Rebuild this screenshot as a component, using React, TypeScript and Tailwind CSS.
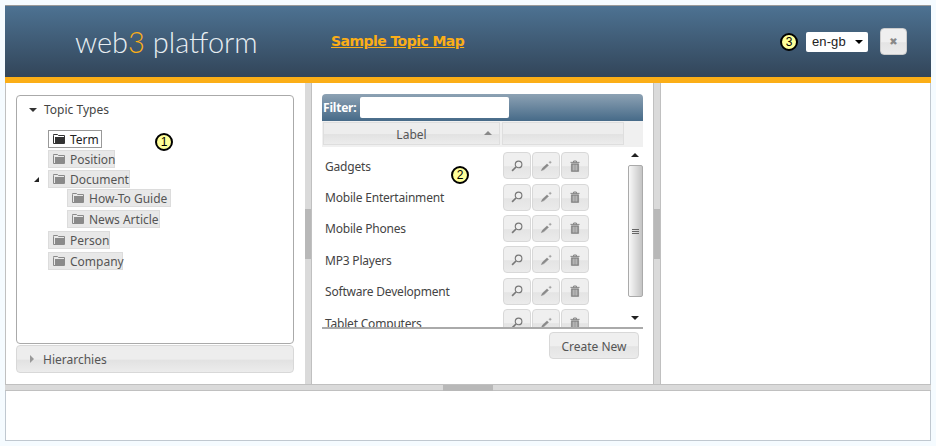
const ui = { fontFamily: '"Noto Sans", "DejaVu Sans", sans-serif' };

function Folder({ dark }: { dark?: boolean }) {
  const c = dark ? "#333" : "#8a8a8a";
  return (
    <svg width="12" height="10" viewBox="0 0 12 10" className="shrink-0">
      <path d="M0.5 1.5V0.5h4l1 1h6v8h-11z" fill="none" stroke={c} strokeWidth="1" />
      <rect x="2" y="3" width="10" height="6" fill={c} />
    </svg>
  );
}

function Badge({ n, className }: { n: number; className?: string }) {
  return (
    <div
      className={`flex h-[18px] w-[18px] items-center justify-center rounded-full border-2 border-black bg-[#ffff99] text-[12px] leading-none text-black ${className ?? ""}`}
      style={{ fontFamily: '"Liberation Sans", sans-serif' }}
    >
      {n}
    </div>
  );
}

function TreeItem({ label, active, width }: { label: string; active?: boolean; width: number }) {
  return (
    <div
      className={`flex h-[18px] items-center gap-[5px] border pl-[4px] text-[12px] ${
        active ? "border-[#999] bg-white text-[#222]" : "border-[#dcdcdc] bg-[#e8e8e8] text-[#555]"
      }`}
      style={{ width }}
    >
      <Folder dark={active} />
      <span className="pt-[2px] whitespace-nowrap">{label}</span>
    </div>
  );
}

function IconButton({ kind }: { kind: "search" | "edit" | "trash" }) {
  return (
    <div className="flex h-[27px] w-[28px] items-center justify-center rounded-[4px] border border-[#d8d8d8] bg-[linear-gradient(#efefef_0%,#efefef_50%,#e4e4e4_55%,#ebebeb_100%)]">
      {kind === "search" && (
        <svg width="12" height="12" viewBox="0 0 13 13" fill="none" stroke="#777">
          <circle cx="8.2" cy="4.8" r="3.6" strokeWidth="1.2" />
          <path d="M5.4 7.6L1.2 11.8" strokeWidth="1.8" />
        </svg>
      )}
      {kind === "edit" && (
        <svg width="12" height="12" viewBox="0 0 13 13" fill="none" stroke="#888">
          <path d="M1.5 11.5L2.8 8.8L7.6 4.2L9.2 5.8L4.2 10.4Z" fill="#888" strokeWidth="0.6" />
          <path d="M11 1v3M9.5 2.5h3" strokeWidth="0.7" />
        </svg>
      )}
      {kind === "trash" && (
        <svg width="10" height="12" viewBox="0 0 11 13" fill="none" stroke="#777">
          <path d="M0.5 2.5h10M4 2.5V1h3v1.5" strokeWidth="1" />
          <path d="M1.5 4h8v8.5h-8z" fill="#808080" strokeWidth="0.6" />
          <path d="M3.5 5v6.5M5.5 5v6.5M7.5 5v6.5" stroke="#ececec" strokeWidth="0.8" />
        </svg>
      )}
    </div>
  );
}

const rows = ["Gadgets", "Mobile Entertainment", "Mobile Phones", "MP3 Players", "Software Development", "Tablet Computers"];

export default function App() {
  return (
    <div className="h-[446px] w-[936px] overflow-hidden bg-[#f5fbff] px-[5px] pt-[5px] text-[12px] text-[#444]" style={ui}>
      <div className="flex h-[436px] w-[926px] flex-col">
        {/* header */}
        <div className="flex h-[72px] shrink-0 items-center border-t border-[#999] bg-[linear-gradient(#4d7292,#324559)]">
          <div
            className="ml-[70px] w-[256px] text-[29px] leading-none font-light text-[#e8eef2]"
            style={{ fontFamily: 'Lato, "Open Sans", sans-serif' }}
          >
            web<span className="text-[#fbae17]">3</span> platform
          </div>
          <a
            className="text-[14px] font-bold text-[#fbae17] underline"
            style={{ fontFamily: '"DejaVu Sans", sans-serif', letterSpacing: "-0.55px" }}
          >
            Sample Topic Map
          </a>
          <div className="ml-auto flex items-center">
            <Badge n={3} className="mr-[8px]" />
            <div
              className="flex h-[20px] w-[62px] items-center justify-between rounded-[2px] bg-white pr-[5px] pl-[6px] text-[13px] tracking-[0.1px] text-[#222]"
              style={{ fontFamily: '"Liberation Sans", sans-serif' }}
            >
              <span>en-gb</span>
              <span className="h-0 w-0 border-x-[4px] border-t-[4px] border-x-transparent border-t-black" />
            </div>
            <div className="mr-[24px] ml-[12px] flex h-[27px] w-[27px] items-center justify-center rounded-[4px] border border-[#ccc] bg-[linear-gradient(#efefef_0%,#efefef_50%,#e4e4e4_55%,#ebebeb_100%)] text-[10px] font-bold text-[#888]">
              ✖
            </div>
          </div>
        </div>
        <div className="h-[6px] shrink-0 bg-[#fbae17]" />

        {/* panes */}
        <div className="flex h-[301px] shrink-0 border-r border-[#c0c8d0] bg-white">
          {/* left pane */}
          <div className="relative flex w-[300px] shrink-0 flex-col border-l border-[#c0c0c0] pt-[12px] pr-[11px] pl-[10px]">
            <div className="relative h-[249px] rounded-[4px] border border-[#aaa] bg-white">
              <div className="flex h-[27px] items-center pl-[12px]">
                <span className="h-0 w-0 border-x-[4px] border-t-[4px] border-x-transparent border-t-[#333]" />
                <span className="ml-[7px] text-[#444]">Topic Types</span>
              </div>
              <div className="flex flex-col pt-[7px] pl-[31px]">
                <TreeItem label="Term" active width={54} />
                <div className="mt-[2px]">
                  <TreeItem label="Position" width={67} />
                </div>
                <div className="relative mt-[2px]">
                  <span className="absolute top-[7px] -left-[14px] h-0 w-0 border-b-[5px] border-l-[5px] border-b-[#222] border-l-transparent" />
                  <TreeItem label="Document" width={82} />
                </div>
                <div className="mt-[1px] ml-[19px]">
                  <TreeItem label="How-To Guide" width={104} />
                </div>
                <div className="mt-[3px] ml-[19px]">
                  <TreeItem label="News Article" width={93} />
                </div>
                <div className="mt-[3px]">
                  <TreeItem label="Person" width={62} />
                </div>
                <div className="mt-[3px]">
                  <TreeItem label="Company" width={75} />
                </div>
              </div>
              <Badge n={1} className="absolute top-[37px] left-[138px]" />
            </div>
            <div className="mt-[1px] flex h-[28px] items-center rounded-[4px] border border-[#d8d8d8] bg-[linear-gradient(#ededed_0%,#ededed_50%,#e2e2e2_55%,#ececec_100%)] pl-[13px] text-[#555]">
              <span className="h-0 w-0 border-y-[4px] border-l-[4px] border-y-transparent border-l-[#999]" />
              <span className="ml-[9px] pt-[2px]">Hierarchies</span>
            </div>
          </div>

          {/* splitter */}
          <div className="flex w-[6px] shrink-0 items-center bg-[#dadada]">
            <div className="h-[50px] w-full bg-[#b8b8b8]" />
          </div>

          {/* middle pane */}
          <div className="flex w-[343px] shrink-0 flex-col border-x border-[#c0c0c0] pt-[11px] pl-[10px]">
            <div className="w-[321px]">
              <div className="flex h-[27px] items-center rounded-t-[4px] bg-[linear-gradient(#8da2b4,#466a88)] pl-[1px]">
                <span className="text-[12px] font-bold tracking-[-0.2px] text-white">Filter:</span>
                <div className="ml-[4px] h-[21px] w-[149px] rounded-[2px] bg-white" />
              </div>
              <div className="flex h-[26px] bg-[#f0f0f0] pt-[1px] pl-[1px]">
                <div className="relative flex h-[23px] w-[177px] items-center justify-center border border-[#dedede] bg-[linear-gradient(#ededed_0%,#ededed_50%,#e2e2e2_55%,#ececec_100%)] text-[#555]">
                  <span className="pt-[2px]">Label</span>
                  <span className="absolute top-[8px] right-[7px] h-0 w-0 border-x-[4px] border-b-[4px] border-x-transparent border-b-[#888]" />
                </div>
                <div className="ml-[2px] h-[23px] w-[122px] border border-[#dedede] bg-[linear-gradient(#ededed_0%,#ededed_50%,#e2e2e2_55%,#ececec_100%)]" />
              </div>
              <div className="relative flex h-[180px]">
                <div className="h-full flex-1 overflow-hidden pt-[3px]">
                  {rows.map((r) => (
                    <div key={r} className="flex h-[31.4px] items-center pl-[3px] text-[#444]">
                      <span className="w-[178px] pt-[2px] tracking-[-0.2px] whitespace-nowrap">{r}</span>
                      <div className="flex gap-px">
                        <IconButton kind="search" />
                        <IconButton kind="edit" />
                        <IconButton kind="trash" />
                      </div>
                    </div>
                  ))}
                </div>
                <div className="flex w-[16px] shrink-0 flex-col items-center bg-white">
                  <div className="flex h-[18px] w-full items-center justify-center pb-[2px]">
                    <span className="h-0 w-0 border-x-[4px] border-b-[4px] border-x-transparent border-b-[#222]" />
                  </div>
                  <div className="flex h-[132px] w-[15px] flex-col items-center justify-center gap-px rounded-[2px] border border-[#aaa] bg-[linear-gradient(90deg,#f8f8f8,#c4c4c4)]">
                    <div className="h-px w-[7px] bg-[#666]" />
                    <div className="h-px w-[7px] bg-[#666]" />
                    <div className="h-px w-[7px] bg-[#666]" />
                  </div>
                  <div className="mt-auto flex h-[18px] w-full items-center justify-center">
                    <span className="h-0 w-0 border-x-[4px] border-t-[4px] border-x-transparent border-t-[#222]" />
                  </div>
                </div>
                <Badge n={2} className="absolute top-[19px] left-[129px]" />
              </div>
              <div className="h-[2px] bg-[#aaa]" />
              <div className="flex justify-end pt-[3px] pr-[4px]">
                <div className="flex h-[27px] w-[90px] items-center justify-center rounded-[4px] border border-[#d8d8d8] bg-[linear-gradient(#efefef_0%,#efefef_50%,#e4e4e4_55%,#ebebeb_100%)] pt-[2px] text-[#555]">
                  Create New
                </div>
              </div>
            </div>
          </div>

          {/* splitter */}
          <div className="flex w-[6px] shrink-0 items-center bg-[#dadada]">
            <div className="h-[50px] w-full bg-[#b8b8b8]" />
          </div>

          {/* right pane */}
          <div className="flex-1 border-l border-[#c0c0c0]" />
        </div>

        {/* horizontal splitter */}
        <div className="flex h-[7px] shrink-0 justify-center border-y border-[#c0c0c0] bg-[#dadada]">
          <div className="h-[6px] w-[50px] bg-[#b8b8b8]" />
        </div>

        {/* bottom pane */}
        <div className="h-[50px] shrink-0 border-x border-b border-[#c0c8d0] bg-white" />
      </div>
    </div>
  );
}
